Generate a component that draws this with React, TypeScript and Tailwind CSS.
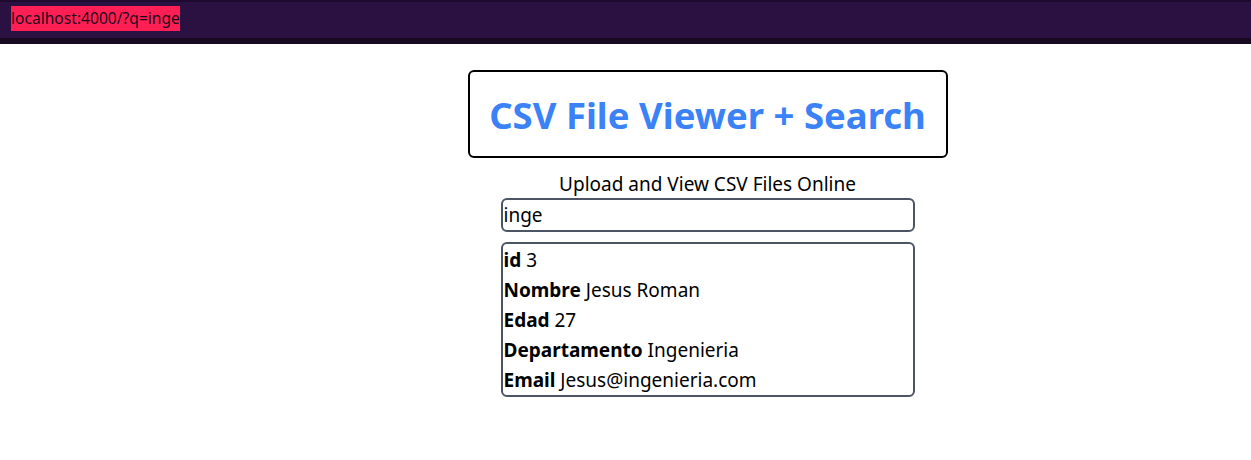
import React from "react";

const rows: [string, string][] = [
  ["id", "3"],
  ["Nombre", "Jesus Roman"],
  ["Edad", "27"],
  ["Departamento", "Ingenieria"],
  ["Email", "Jesus@ingenieria.com"],
];

export default function App() {
  return (
    <div className="min-h-[460px] bg-white text-black" style={{ fontFamily: '"Noto Sans", "Open Sans", sans-serif' }}>
      <header className="h-[44px] bg-[#2b1042] border-t-2 border-t-[#1e0a2e] border-b-[6px] border-b-[#170a21] pl-[11px] pt-[4px]">
        <span className="inline-block h-[25px] bg-[#ff1f55] text-[15.6px] leading-[25px] text-[#1a0a1a]">localhost:4000/?q=inge</span>
      </header>
      <main className="flex flex-col items-center ml-[164px] pt-[26px]">
        <div className="border-2 border-black rounded-md w-[480px] h-[88px] flex items-center justify-center pt-[3px]">
          <h1 className="text-[36.5px] font-bold text-[#3b82f6] leading-none">CSV File Viewer + Search</h1>
        </div>
        <p className="mt-[13px] text-[19px] leading-[27px]">Upload and View CSV Files Online</p>
        <input
          readOnly
          value="inge"
          className="w-[414px] h-[34px] border-2 border-[#4b5563] rounded-md px-[1px] text-[19px] outline-none"
        />
        <div className="mt-[10px] w-[414px] border-2 border-[#4b5563] rounded-md px-[1px] pt-[1px]">
          {rows.map(([k, v]) => (
            <div key={k} className="h-[30px] leading-[30px] text-[19px]">
              <span className="font-bold">{k}</span> {v}
            </div>
          ))}
        </div>
      </main>
    </div>
  );
}
